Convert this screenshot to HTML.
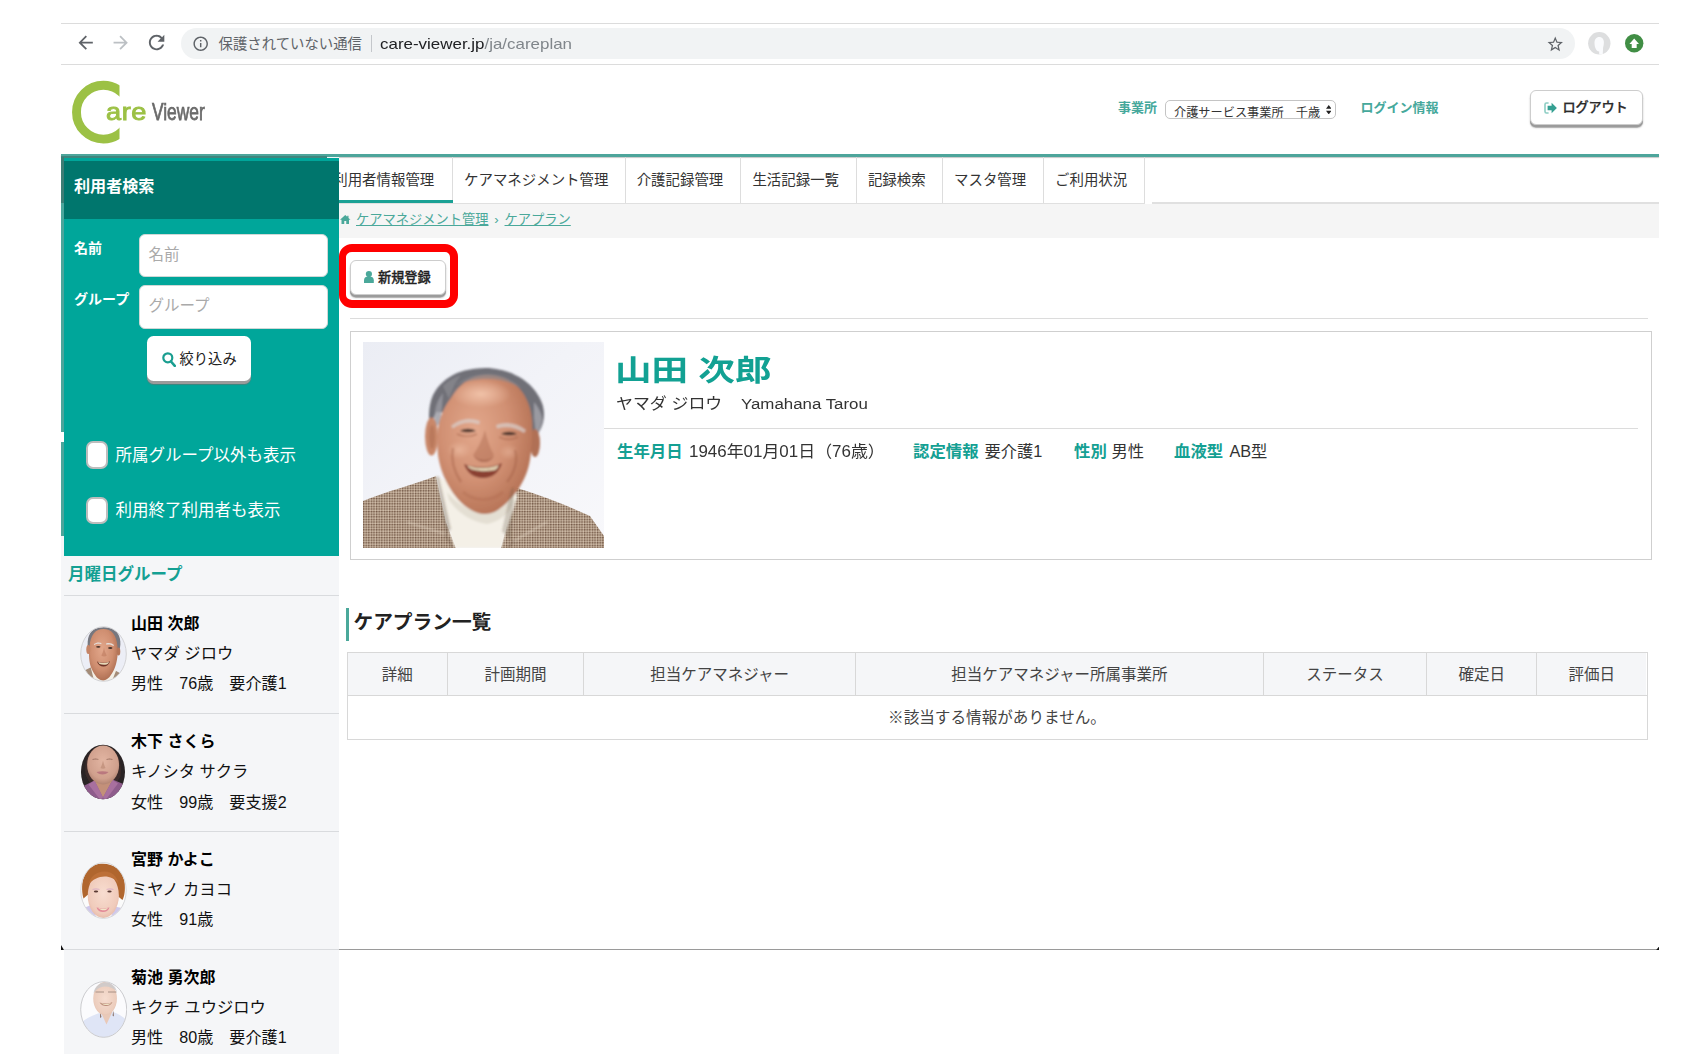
<!DOCTYPE html>
<html lang="ja">
<head>
<meta charset="utf-8">
<title>Care Viewer</title>
<style>
*{box-sizing:border-box;margin:0;padding:0}
html,body{width:1700px;height:1054px;overflow:hidden;background:#fff}
body{position:relative;font-family:"Liberation Sans","Noto Sans CJK JP",sans-serif;color:#333;font-size:14px}
.a{position:absolute;white-space:nowrap}
.t{position:absolute;white-space:nowrap;line-height:20px;height:20px}
.b{font-weight:bold}
.teal{color:#14a093}
/* browser chrome */
#ctop{left:61px;top:23px;width:1598px;height:1px;background:#dcdcdc}
#cbot{left:61px;top:64px;width:1598px;height:1px;background:#dcdcdc}
#pill{left:180.5px;top:28px;width:1394px;height:31px;border-radius:15.5px;background:#f1f3f4}
/* header */
#tline{left:61px;top:154px;width:1598px;height:2.600px;background:#4da59b;box-shadow:0 1px 1px rgba(0,0,0,.22)}
/* sidebar */
#sb{left:61px;top:157px;width:278px;height:897px;background:#f5f6f8}
#sbhead,#sbtop,#sbbody{left:3px !important;width:275px !important}
#sbtop{left:0;top:.5px;width:278px;height:3px;background:#00a69a}
#sbhead{left:0;top:3.100px;width:278px;height:58.600px;background:#00766d}
#sbbody{left:0;top:61.700px;width:278px;height:336.900px;background:#00a69a}
.inp{background:#fff;border-radius:6px;border:1px solid #cfd8d6}
.sbl{left:0;width:278px;height:1px;background:#d9dbde}
.li{left:70px;font-size:16.3px;line-height:22px;height:22px;color:#111}
.li.n{font-weight:bold;color:#000;font-size:16px}
.cond{display:inline-block;transform-origin:0 50%}
/* tabs */
.tab{top:157px;height:46px;line-height:46px;font-size:14.45px;color:#333;border-right:1px solid #ddd;text-align:center;padding-right:5px}
/* table */
.th{top:653px;height:42px;line-height:44px;font-size:15.5px;color:#444;text-align:center;background:#f5f6f8;border-right:1px solid #d8d8d8}
</style>
</head>
<body>
<!-- CHROME -->
<div class="a" id="ctop"></div>
<div class="a" id="cbot"></div>
<div class="a" id="pill"></div>
<svg class="a" style="left:74.6px;top:32.3px" width="21.4" height="21.4" viewBox="0 0 24 24"><path fill="#5f6368" d="M20 11H7.83l5.59-5.59L12 4l-8 8 8 8 1.41-1.41L7.83 13H20v-2z"/></svg>
<svg class="a" style="left:110.3px;top:32.3px" width="21.4" height="21.4" viewBox="0 0 24 24"><path fill="#bcc0c4" d="M12 4l-1.41 1.41L16.17 11H4v2h12.17l-5.58 5.59L12 20l8-8z"/></svg>
<svg class="a" style="left:144.9px;top:31.4px" width="23.2" height="23.2" viewBox="0 0 24 24"><path fill="#5f6368" d="M17.65 6.35C16.2 4.9 14.21 4 12 4c-4.42 0-7.99 3.58-7.99 8s3.57 8 7.99 8c3.73 0 6.84-2.55 7.73-6h-2.08c-.82 2.33-3.04 4-5.65 4-3.31 0-6-2.69-6-6s2.69-6 6-6c1.66 0 3.14.69 4.22 1.78L13 11h7V4l-2.35 2.35z"/></svg>
<svg class="a" style="left:192.3px;top:34.8px" width="17.4" height="17.4" viewBox="0 0 24 24"><path fill="#5f6368" d="M11 17h2v-6h-2v6zm1-15C6.48 2 2 6.48 2 12s4.48 10 10 10 10-4.48 10-10S17.52 2 12 2zm0 18c-4.41 0-8-3.59-8-8s3.59-8 8-8 8 3.59 8 8-3.59 8-8 8zM11 9h2V7h-2v2z"/></svg>
<div class="t" style="left:218.5px;top:33.5px;font-size:14.4px;color:#5f6368">保護されていない通信</div>
<div class="a" style="left:371px;top:35px;width:1px;height:17px;background:#c4c7cb"></div>
<div class="t" style="left:380.3px;top:33.5px;font-size:15px;color:#202124;transform:scaleX(1.129);transform-origin:0 50%">care-viewer.jp<span style="color:#80868b">/ja/careplan</span></div>
<svg class="a" style="left:1545.5px;top:34.6px" width="18.5" height="18.5" viewBox="0 0 24 24"><path fill="#5f6368" d="M22 9.24l-7.19-.62L12 2 9.19 8.63 2 9.24l5.46 4.73L5.82 21 12 17.27 18.18 21l-1.63-7.03L22 9.24zM12 15.4l-3.76 2.27 1-4.28-3.32-2.88 4.38-.38L12 6.1l1.71 4.04 4.38.38-3.32 2.88 1 4.28L12 15.4z"/></svg>
<svg class="a" style="left:1588px;top:32px" width="23" height="23" viewBox="0 0 23 23"><defs><clipPath id="gc"><circle cx="11.300" cy="11.300" r="11.200"/></clipPath></defs><circle cx="11.300" cy="11.300" r="11.200" fill="#dddedf"/><path clip-path="url(#gc)" fill="#fafbfd" d="M11.200 5c-2.900 0-4.700 2.500-4.700 6 0 2.800.7 5.400 1.900 7 .8 1.100 1.900 1.600 2.700 1.300l.2 4h3.400l.4-7.500c.5-2 .8-3.700.8-5.300 0-3.300-1.800-5.500-4.700-5.500z"/></svg>
<svg class="a" style="left:1625.200px;top:34.2px" width="18.4" height="18.4" viewBox="0 0 20 20"><circle cx="10" cy="10" r="10" fill="#418e45"/><path fill="#fff" d="M10 4.900L4.800 11h2.500v4.300h5.400V11h2.500z"/></svg>
<!-- HEADER -->
<div class="a" id="tline"></div>
<svg class="a" style="left:70px;top:78px" width="52" height="68" viewBox="70 78 52 68"><defs><clipPath id="cc"><rect x="70" y="78" width="49.5" height="68"/></clipPath></defs><circle cx="103.4" cy="112.2" r="26.9" fill="none" stroke="#9cc145" stroke-width="8.9" clip-path="url(#cc)"/></svg>
<div class="a" style="left:105.800px;top:94.300px;height:36px;line-height:36px;font-size:24px;color:#9cc145;letter-spacing:.5px;-webkit-text-stroke:.9px #9cc145;transform:scaleX(1.13);transform-origin:0 50%">are</div>
<div class="a" style="left:151.5px;top:94px;height:36px;line-height:36px;font-size:23.600px;color:#6a6a6a;-webkit-text-stroke:.75px #6a6a6a;transform:scaleX(.735);transform-origin:0 50%">Viewer</div>
<div class="t b" style="left:1118px;top:97.5px;font-size:13px;color:#45a89b">事業所</div>
<div class="a" style="left:1164.5px;top:100px;width:171.5px;height:18.5px;border:1px solid #c4c4c4;border-radius:5px;background:#fff"></div>
<div class="t" style="left:1174px;top:102.8px;font-size:12.2px;color:#333">介護サービス事業所　千歳</div>
<svg class="a" style="left:1325.5px;top:104.5px" width="5.500" height="9.500" viewBox="0 0 6.500 11"><path fill="#222" d="M3.250 0L6.500 4.300H0zM3.250 11L0 6.700h6.500z"/></svg>
<div class="t b" style="left:1360.5px;top:97.5px;font-size:13px;color:#45a89b">ログイン情報</div>
<div class="a" style="left:1530.3px;top:89.7px;width:112.4px;height:35.8px;border:1px solid #cdcdcd;border-radius:6px;background:#fff;box-shadow:0 2.200px 0 0 #9b9b9b,0 2.800px 1.500px 0 rgba(120,120,120,.6)"></div>
<svg class="a" style="left:1544px;top:101.500px" width="13" height="12" viewBox="0 0 13 12"><path fill="none" stroke="#8ccdc3" stroke-width="1.600" d="M4.600 1H2.400C1.500 1 1 1.500 1 2.400v7.200C1 10.500 1.500 11 2.400 11h2.200"/><path fill="#35a092" d="M7.600 .8L12.900 6 7.600 11.200V8.200H3.600V3.800h4z"/></svg>
<div class="t" style="left:1562.5px;top:98.300px;font-size:13.2px;color:#2b2b2b;letter-spacing:-.2px;font-weight:500;-webkit-text-stroke:.25px #2b2b2b">ログアウト</div>
<!-- TABS -->
<div class="a" style="left:339px;top:203px;width:806px;height:1px;background:#e0e0e0"></div>
<div class="a" style="left:1152px;top:202.200px;width:507px;height:1.600px;background:#e0e0e0"></div>
<div class="a tab" style="left:320.50px;width:132.50px">利用者情報管理</div>
<div class="a tab" style="left:453.00px;width:172.50px">ケアマネジメント管理</div>
<div class="a tab" style="left:625.50px;width:115.00px">介護記録管理</div>
<div class="a tab" style="left:740.50px;width:116.50px">生活記録一覧</div>
<div class="a tab" style="left:857.00px;width:85.50px">記録検索</div>
<div class="a tab" style="left:942.50px;width:101.25px">マスタ管理</div>
<div class="a tab" style="left:1043.75px;width:100.75px">ご利用状況</div>
<div class="a" style="left:339px;top:200px;width:113.5px;height:3px;background:#1aa195"></div>
<div class="a" style="left:339px;top:204px;width:1320px;height:34.4px;background:#f5f5f5"></div>
<svg class="a" style="left:340px;top:214.500px" width="10.500" height="9" viewBox="0 0 21 18"><path fill="#4aa89a" d="M10.500 0L0 9.500h3V18h5.500v-6h4v6H18V9.500h3L17 5.900V1.500h-2.500v2.100z"/></svg>
<div class="t" style="left:356px;top:209.500px;font-size:13.25px;color:#4aa89a"><span style="text-decoration:underline">ケアマネジメント管理</span><span style="display:inline-block;width:16px;text-align:center">›</span><span style="text-decoration:underline">ケアプラン</span></div>
<!-- MAIN -->
<div class="a" style="left:338.8px;top:244.4px;width:119.2px;height:63.8px;border:8px solid #ff0000;border-left-width:7px;border-radius:13px"></div>
<div class="a" style="left:349.5px;top:259.800px;width:96.5px;height:35.600px;border:1px solid #cdcdcd;border-radius:6px;background:#fff;box-shadow:0 2.200px 0 0 #9b9b9b,0 2.800px 1.500px 0 rgba(120,120,120,.6)"></div>
<svg class="a" style="left:363.8px;top:271.2px" width="9.800" height="12" viewBox="0 0 9.800 12"><circle cx="4.900" cy="3.100" r="3.100" fill="#4aa89a"/><path fill="#4aa89a" d="M0 12V9.200C0 7 1.600 5.800 3 5.800h3.800c1.400 0 3 1.200 3 3.400V12z"/></svg>
<div class="t" style="left:378px;top:267.6px;font-size:13.2px;color:#222;font-weight:500;-webkit-text-stroke:.3px #222">新規登録</div>
<div class="a" style="left:349.5px;top:317.5px;width:1298.500px;height:1px;background:#dcdcdc"></div>
<div class="a" style="left:350px;top:331px;width:1301.500px;height:228.500px;border:1px solid #cfcfcf;background:#fff"></div>
<svg class="a" style="left:363px;top:342px" width="241" height="206" viewBox="0 0 241 206">
<defs>
<linearGradient id="pbg" x1="0" y1="0" x2="1" y2="1"><stop offset="0" stop-color="#ebedf4"/><stop offset=".45" stop-color="#f2f3f8"/><stop offset="1" stop-color="#f8f8fb"/></linearGradient>
<radialGradient id="pface" cx=".4" cy=".4" r=".72"><stop offset="0" stop-color="#e3a88c"/><stop offset=".5" stop-color="#d19073"/><stop offset=".85" stop-color="#b87558"/><stop offset="1" stop-color="#9c5f46"/></radialGradient>
<radialGradient id="phl" cx=".5" cy=".5" r=".5"><stop offset="0" stop-color="#f3c6ad" stop-opacity=".9"/><stop offset="1" stop-color="#f3c6ad" stop-opacity="0"/></radialGradient>
<pattern id="chk" width="2.600" height="2.600" patternUnits="userSpaceOnUse"><rect width="2.600" height="2.600" fill="#b29a85"/><rect width="1.300" height="1.300" fill="#6f5646"/><rect x="1.300" y="1.300" width="1.300" height="1.300" fill="#d4c4b2"/></pattern>
<filter id="pbl"><feGaussianBlur stdDeviation="1.100"/></filter>
<filter id="pbl2"><feGaussianBlur stdDeviation="2.200"/></filter>
<filter id="pbl0"><feGaussianBlur stdDeviation=".45"/></filter>
</defs>
<rect width="241" height="206" fill="url(#pbg)"/>
<g filter="url(#pbl0)">
<path fill="url(#chk)" d="M0 159c24-10 50-16 73-25l10 46 10 26H0z"/>
<path fill="url(#chk)" d="M151 145c26 8 52 18 76 29l14 20v12H138l8-33z"/>
</g>
<g filter="url(#pbl)">
<path fill="#6f6f77" d="M67 86c-2-12-1-24 3-33 5-10 13-17 24-22 10-4 22-5 32-5 10 1 19 3 26 7 9 4 16 10 21 17 5 7 8 14 8 22 0 10-4 19-11 25l-3-22-94-5z"/>
<path fill="#9a9aa1" d="M72 70c1-8 4-14 8-19-1 10-1 20-3 30l-5 5c-1-6-1-11 0-16z" opacity=".8"/>
<path fill="#a5a5ab" d="M171 60c5 6 8 12 8 18-1 7-3 12-6 16l-2-18z" opacity=".8"/>
<path fill="#8b8b92" d="M80 44c6-6 12-9 18-11-5 6-9 14-12 24z" opacity=".7"/>
<ellipse cx="68.500" cy="94.500" rx="6.500" ry="19" fill="#c98769"/>
<ellipse cx="69" cy="95" rx="3" ry="12" fill="#a9684d" opacity=".45"/>
<ellipse cx="172" cy="101" rx="5" ry="14" fill="#b07055"/>
<path fill="#f4f0e7" d="M73 134l14 6 66 6 1 10-16 50H92l-9-26z"/>
<path fill="#d9d3c6" d="M84 150c10 12 24 20 40 22 10-2 20-8 26-18l2 6c-6 12-16 20-28 22-16-2-30-12-38-24z" opacity=".6"/>
<path fill="url(#pface)" d="M75 86c2-10 6-22 13-30 5-8 11-15 19-19 6-3 11-4 17-4 13 0 24 5 32 13 8 9 12 20 13 32 1 10 0 22-1 32-1 10-3 20-8 29-6 12-15 22-25 29-6 4-14 5-20 3-9-3-18-10-25-20-8-12-13-24-15-38-1-9-1-18 0-27z"/>
<ellipse cx="118" cy="52" rx="30" ry="14" fill="url(#phl)"/>
<ellipse cx="96" cy="108" rx="12" ry="9" fill="url(#phl)" opacity=".6"/>
<ellipse cx="146" cy="110" rx="10" ry="8" fill="url(#phl)" opacity=".45"/>
<path fill="#85858c" d="M92 44c8-8 20-12 32-12 13 0 26 5 36 15-12-7-23-10-36-10-12 0-22 2-32 7z" opacity=".65"/>
<path fill="#d8d0cd" opacity=".7" d="M88 84c8-7 19-9 29-5l-1 3.500c-9-3-18-2-26 4z"/>
<path fill="#d8d0cd" opacity=".7" d="M133 83c10-4 21-2 30 5l-2 3c-9-6-18-7-27-4.500z"/>
<path fill="#46302a" d="M97 89c5-3 11-3 16 0-5 1.800-11 1.800-16 0z"/>
<path fill="#46302a" d="M138 92c5-3 11-3 16 0-5 1.800-11 1.800-16 0z"/>
<path d="M94 92c6 3 14 3 20 0M136 95c6 3 13 3 19 0" stroke="#a5634a" stroke-width="1.500" fill="none" opacity=".6"/>
<path fill="#a8644a" d="M122 88c2 9 5 18 9 25-3 5-9 6-14 5-4-1-6-3-7-5 5-7 9-15 12-25z" opacity=".4"/>
<path fill="#8f4e3a" d="M111 114c3 3 7 4 10 4s7-1 10-4c-2 4-6 6-10 6s-8-2-10-6z" opacity=".55"/>
<path fill="#8a3f33" d="M101 122c12 4.500 26 4.500 38-1-3 10-10 15-19 15s-16-5-19-14z"/>
<path fill="#e3d4b4" d="M104 123.500c10 3.500 22 3.500 32-.500-1 2.500-2.500 4.500-4.500 5.200-8 1.300-16 1-23-1-2-.7-3.500-2-4.500-3.700z"/>
<path d="M109 124v5M114.500 125v5M120 125.300v5M125.500 125v5M131 124v5" stroke="#bfae90" stroke-width=".6" opacity=".7"/>
<path d="M90 106c-2 10 0 22 8 34" stroke="#9d5b42" stroke-width="2.500" fill="none" opacity=".4"/>
<path d="M152 108c3 10 0 22-8 32" stroke="#9d5b42" stroke-width="2.500" fill="none" opacity=".4"/>
<path d="M100 150c12 10 28 10 40 0" stroke="#a9654a" stroke-width="3" fill="none" opacity=".3"/>
</g>
<g filter="url(#pbl)">
<path fill="#5e4a3c" d="M73 134l3 1 12 52-5 5z" opacity=".3"/>
<path fill="#5e4a3c" d="M151 145l-3 2-9 42 9 10z" opacity=".25"/>
<path d="M44 180l38 12M184 180l-33 19" stroke="#e6dac9" stroke-width="1.200" opacity=".7"/>
<path d="M82 192l8 14M151 199l-6 7" stroke="#6a5445" stroke-width="1.500" opacity=".5"/>
</g>
</svg>

<div class="a b" style="left:615px;top:349px;height:44px;line-height:44px;font-size:32px;color:#12a193;transform:scale(1.143,.91);transform-origin:0 50%">山田 次郎</div>
<div class="t" style="left:616px;top:394px;font-size:15.6px;color:#333;transform:scaleX(1.085);transform-origin:0 50%">ヤマダ ジロウ</div>
<div class="t" style="left:741px;top:393.800px;font-size:15.2px;color:#333;transform:scaleX(1.11);transform-origin:0 50%">Yamahana Tarou</div>
<div class="a" style="left:604px;top:427.5px;width:1034px;height:1px;background:#dcdcdc"></div>
<div class="t b teal" style="left:617px;top:441px;font-size:16.4px">生年月日</div>
<div class="t" style="left:688.8px;top:441px;font-size:16.3px;color:#333;transform:scaleX(1.04);transform-origin:0 50%">1946年01月01日（76歳）</div>
<div class="t b teal" style="left:913px;top:441px;font-size:16.4px">認定情報</div>
<div class="t" style="left:984.5px;top:441px;font-size:16.3px;color:#333">要介護1</div>
<div class="t b teal" style="left:1074px;top:441px;font-size:16.4px">性別</div>
<div class="t" style="left:1111.5px;top:441px;font-size:16.3px;color:#333">男性</div>
<div class="t b teal" style="left:1174px;top:441px;font-size:16.4px">血液型</div>
<div class="t" style="left:1229.4px;top:441px;font-size:16.3px;color:#333">AB型</div>
<div class="a" style="left:346.2px;top:607.5px;width:3.300px;height:33px;background:#4aa89a"></div>
<div class="a b" style="left:353.5px;top:608px;height:28px;line-height:28px;font-size:19.700px;color:#222">ケアプラン一覧</div>
<div class="a" style="left:346.500px;top:652px;width:1301px;height:87.500px;border:1px solid #d8d8d8;background:#fff"></div>
<div class="a" style="left:347.500px;top:695px;width:1299px;height:1px;background:#d8d8d8"></div>
<div class="a th" style="left:347.50px;width:100.50px">詳細</div>
<div class="a th" style="left:448.00px;width:136.25px">計画期間</div>
<div class="a th" style="left:584.25px;width:271.95px">担当ケアマネジャー</div>
<div class="a th" style="left:856.20px;width:407.50px">担当ケアマネジャー所属事業所</div>
<div class="a th" style="left:1263.70px;width:163.50px">ステータス</div>
<div class="a th" style="left:1427.20px;width:109.90px">確定日</div>
<div class="a th" style="left:1537.10px;width:109.40px;border-right:0">評価日</div>
<div class="t" style="left:347.5px;width:1299px;top:707.700px;font-size:15.6px;color:#444;text-align:center">※該当する情報がありません。</div>
<div class="a" style="left:339px;top:948.5px;width:1320px;height:1px;background:#9a9a9a"></div>
<!-- SIDEBAR -->
<div class="a" id="sb">
<div class="a" id="sbhead"></div>
<div class="a" id="sbtop"></div>
<div class="a" style="left:0;top:-1.300px;width:266px;height:2.300px;background:#3f857d"></div>
<div class="a" id="sbbody"></div>
<div class="a" style="left:0;top:0;width:3px;height:46px;background:#3d7d75"></div>
<div class="a" style="left:0;top:46px;width:3px;height:332.700px;background:#4ba59b"></div>
<div class="a" style="left:0;top:274.800px;width:3px;height:10.400px;background:#fff"></div>
<div class="a" style="left:0;top:792px;width:3px;height:105px;background:#fff"></div>
</div>
<div class="t b" style="left:74px;top:176px;font-size:16.1px;color:#fff">利用者検索</div>
<div class="t b" style="left:74px;top:237.7px;font-size:14px;color:#fff">名前</div>
<div class="a inp" style="left:139px;top:233.5px;width:189px;height:43.5px"></div>
<div class="t" style="left:148.4px;top:244.5px;font-size:15.5px;color:#aaa">名前</div>
<div class="t b" style="left:74px;top:289px;font-size:14px;color:#fff">グループ</div>
<div class="a inp" style="left:139px;top:285px;width:189px;height:43.5px"></div>
<div class="t" style="left:148.4px;top:295.800px;font-size:15.5px;color:#aaa">グループ</div>
<div class="a" style="left:147.2px;top:336.100px;width:103.4px;height:44.600px;border-radius:6.500px;background:#fff;box-shadow:0 3px 0 0 #9b9b9b,0 3.600px 1px 0 rgba(110,110,110,.6)"></div>
<svg class="a" style="left:161.5px;top:351.5px" width="14" height="15" viewBox="0 0 14 15"><circle cx="5.800" cy="5.800" r="4.500" fill="none" stroke="#1a9e90" stroke-width="2.200"/><path d="M9 9.500l3.800 4.300" stroke="#1a9e90" stroke-width="2.600" stroke-linecap="round"/></svg>
<div class="t" style="left:179.5px;top:348.700px;font-size:14.3px;color:#222">絞り込み</div>
<div class="a" style="left:85.700px;top:441.200px;width:22.600px;height:27.600px;border:2px solid #bdbdbd;border-radius:7px;background:#fff"></div>
<div class="t" style="left:115.5px;top:444.500px;font-size:16.5px;color:#fff">所属グループ以外も表示</div>
<div class="a" style="left:85.700px;top:496.700px;width:22.600px;height:27.600px;border:2px solid #bdbdbd;border-radius:7px;background:#fff"></div>
<div class="t" style="left:115.5px;top:500.300px;font-size:16.5px;color:#fff">利用終了利用者も表示</div>
<div class="t b teal" style="left:68px;top:563.700px;font-size:16.5px">月曜日グループ</div>
<div class="a sbl" style="left:64px;top:594.50px;width:275px"></div>
<div class="a li n" style="left:131px;top:612.75px">山田 次郎</div>
<div class="a li" style="left:131px;top:642.00px">ヤマダ ジロウ</div>
<div class="a li" style="left:131px;top:672.25px"><span class="cond" style="font-size:16.1px">男性　76歳　要介護1</span></div>
<svg class="a" style="left:79.5px;top:626px" width="47" height="56" viewBox="-0.5 -0.5 47 56"><defs><clipPath id="c0"><ellipse cx="23" cy="27.5" rx="22.6" ry="27.1"/></clipPath><filter id="ab"><feGaussianBlur stdDeviation=".5"/></filter><radialGradient id="f0" cx=".45" cy=".4" r=".65"><stop offset="0" stop-color="#e2a78b"/><stop offset=".6" stop-color="#cf8e70"/><stop offset="1" stop-color="#a8694e"/></radialGradient></defs>
<g clip-path="url(#c0)"><rect x="-1" y="-1" width="48" height="57" fill="#eceef6"/><g filter="url(#ab)">
<path fill="#77777e" d="M7.500 22C6 12 9 4 16 1.800c5-1.500 11-1.500 16 .5 6 3 9 10 7.500 19l-2 5-28 .5z"/>
<path fill="#a48c78" d="M4 44l8-4 3 16H4zM33 43l9 5v8H29z"/>
<path fill="#f3efe6" d="M10 40l26 3-5 13H14z"/>
<path fill="url(#f0)" d="M9 20C10 8 15 2.500 23 2.500S36 8 37 20c.8 8-.5 16-3 22-3 7-7 12-11.500 12S14 49 11 42C8.500 36 8 28 9 20z"/>
<ellipse cx="7.800" cy="23" rx="2" ry="4.500" fill="#c58466"/><ellipse cx="38" cy="25" rx="1.800" ry="4" fill="#b57558"/>
<path fill="#e4dedb" d="M13.500 17.500c2-1.500 5-2 7.500-1l-.3 1.200c-2.500-.8-5-.4-7 1zM25.500 17c3-1 6-.4 8 1.500l-.6 1c-2-1.500-4.500-2-7-1.200z"/>
<ellipse cx="17.800" cy="20.300" rx="2.200" ry=".9" fill="#4a342c"/><ellipse cx="29.800" cy="21.500" rx="2.200" ry=".9" fill="#4a342c"/>
<path fill="#b87458" d="M23.500 21c.5 3 1.500 6 2.800 8-1.500 1.200-4 1.200-5.500 0 1.200-2 2.200-5 2.700-8z" opacity=".5"/>
<path fill="#6e3327" d="M16.500 35c4 1.800 9 1.800 13-.3-1 3.500-3.500 5.300-6.500 5.300s-5.500-1.800-6.500-5z"/>
<path fill="#e6d8b8" d="M17.500 35.600c3.500 1.200 7.500 1.200 11-.2-.5 1.500-1.500 2.300-2.500 2.600-2.500.4-5 .2-7-.6z"/>
</g></g><ellipse cx="23" cy="27.500" rx="22.800" ry="27.300" fill="none" stroke="#c9c9cc" stroke-width=".8"/></svg>
<div class="a sbl" style="left:64px;top:712.75px;width:275px"></div>
<div class="a li n" style="left:131px;top:731.00px">木下 さくら</div>
<div class="a li" style="left:131px;top:760.25px">キノシタ サクラ</div>
<div class="a li" style="left:131px;top:790.50px"><span class="cond" style="font-size:16.1px">女性　99歳　要支援2</span></div>
<svg class="a" style="left:80px;top:744px" width="46" height="56" viewBox="-0.5 -0.5 46 56"><defs><clipPath id="c1"><ellipse cx="22.500" cy="27.500" rx="22" ry="27.200"/></clipPath><radialGradient id="f1" cx=".5" cy=".4" r=".65"><stop offset="0" stop-color="#e2b5a2"/><stop offset=".7" stop-color="#d0a08d"/><stop offset="1" stop-color="#a87a68"/></radialGradient></defs>
<g clip-path="url(#c1)"><rect x="-1" y="-1" width="48" height="57" fill="#2a2425"/><g filter="url(#ab)">
<path fill="#3b2b29" d="M5 30C3 14 10 2 22.500 1.500 35 2 42 14 40 32l-4 6H9z"/>
<path fill="#8e5c8c" d="M2 42l12-6 9 6 9-7 12 5v16H2z"/>
<path fill="#c39079" d="M14 36l8.500 17L32 35.500z"/>
<path fill="#a8709f" d="M14 36l8.500 17-3 2L8 40zM32 35.500L22.500 53l3 2 12-16z"/>
<ellipse cx="22.600" cy="20.500" rx="16" ry="19.500" fill="url(#f1)"/>
<path fill="#7d5648" d="M12 14.500c2-.8 4-.8 6 0l-.2.800c-2-.5-4-.5-5.600.1zM26 14.500c2-.8 4-.8 6 0l-.2.900c-2-.6-3.800-.6-5.600 0z" opacity=".7"/>
<path fill="#b5707a" d="M16 27.500c4-1 8-1 12 0-2 1.800-4 2.500-6 2.500s-4-.7-6-2.500z" opacity=".85"/>
<path fill="#b07d68" d="M22.500 16c.8 3 1.500 5.500 2.500 7.500-1.500 1-3.500 1-5 0 1-2 1.800-4.500 2.500-7.500z" opacity=".5"/>
</g></g></svg>
<div class="a sbl" style="left:64px;top:830.50px;width:275px"></div>
<div class="a li n" style="left:131px;top:848.75px">宮野 かよこ</div>
<div class="a li" style="left:131px;top:878.00px">ミヤノ カヨコ</div>
<div class="a li" style="left:131px;top:908.25px"><span class="cond" style="font-size:16.1px">女性　91歳</span></div>
<svg class="a" style="left:80px;top:862px" width="47" height="57" viewBox="-0.5 -0.5 47 57"><defs><clipPath id="c2"><ellipse cx="23" cy="28" rx="22.500" ry="27.700"/></clipPath><radialGradient id="f2" cx=".5" cy=".45" r=".65"><stop offset="0" stop-color="#f8ddd0"/><stop offset=".7" stop-color="#f0cbbb"/><stop offset="1" stop-color="#dfae9b"/></radialGradient></defs>
<g clip-path="url(#c2)"><rect x="-1" y="-1" width="48" height="58" fill="#fbfbfb"/><g filter="url(#ab)">
<path fill="#b0662f" d="M3 36C-1 20 4 4 18 1.500c12-2 24 4 26 18 1 8 0 14-2 18l-5-4-30-1z"/>
<path fill="#cfc8ea" d="M2 46l10-4 4 14H2zM34 44l10 2v10H30z"/>
<ellipse cx="22.800" cy="33" rx="15.600" ry="22.500" fill="url(#f2)"/>
<path fill="#bd7038" d="M8 22c2-8 8-13 16-13 7 0 12 4 14 12-4-5-8-7-14-7s-12 3-16 8z"/>
<ellipse cx="15.500" cy="29" rx="2.200" ry="1" fill="#5a3a34"/><ellipse cx="29" cy="29" rx="2.200" ry="1" fill="#5a3a34"/>
<path fill="#d6a8c4" d="M12 26.500c2-1 5-1 7 0v1c-2-.7-5-.7-7 0zM26 26.500c2-1 5-1 7 0v1c-2-.7-5-.7-7 0z" opacity=".7"/>
<path fill="#e28a98" d="M16 45c4 1 9 1 13 0-1 3-3.500 4.500-6.500 4.500S17 48 16 45z"/>
<path fill="#f3e6c8" d="M17.500 45.500c3.500.8 6.500.8 10 0-.8 1.300-2 2-3 2.200-2 .2-5 0-7-2.200z"/>
</g></g><ellipse cx="23" cy="28" rx="22.700" ry="27.900" fill="none" stroke="#cfcfd2" stroke-width=".8"/></svg>
<div class="a sbl" style="left:64px;top:948.50px;width:275px"></div>
<div class="a li n" style="left:131px;top:966.75px">菊池 勇次郎</div>
<div class="a li" style="left:131px;top:996.00px">キクチ ユウジロウ</div>
<div class="a li" style="left:131px;top:1026.25px"><span class="cond" style="font-size:16.1px">男性　80歳　要介護1</span></div>
<svg class="a" style="left:79.500px;top:980.500px" width="47" height="57" viewBox="-0.5 -0.5 47 57"><defs><clipPath id="c3"><ellipse cx="23.200" cy="28" rx="22.800" ry="27.600"/></clipPath><radialGradient id="f3" cx=".5" cy=".5" r=".65"><stop offset="0" stop-color="#f6ddd0"/><stop offset=".7" stop-color="#eccdbd"/><stop offset="1" stop-color="#d9b09c"/></radialGradient></defs>
<g clip-path="url(#c3)"><rect x="-1" y="-1" width="48" height="58" fill="#fbfbfd"/><g filter="url(#ab)">
<path fill="#dfe5f6" d="M0 42c6-6 14-9 21-11l5 8 5-9c7 2 12 5 16 10v16H0z"/>
<path fill="#e9c9b8" d="M20 30l6 13 6-13z"/>
<path fill="#7a5a4c" d="M19.500 29.500l1.500 6-1.500 1zM33 29l-1 5 1.500 1z" opacity=".8"/>
<ellipse cx="24.600" cy="17" rx="11.800" ry="16.500" fill="url(#f3)"/>
<path fill="#c9c9cc" d="M13 12c1-7 6-11 12-11 5 0 10 3 11.500 9-3-3-7-5-12-5-5 0-9 3-11.500 7z" opacity=".8"/>
<path d="M15 10.500h8.500M27.500 10.500H36" stroke="#a08a80" stroke-width=".9" fill="none"/>
<path fill="#b98a78" d="M19 21c4 1.500 9 1.500 13-.5-1.500 3-4 4-6.500 4S20.500 23.500 19 21z"/>
<path fill="#efe2c4" d="M20.500 21.800c3.500 1 6.500.8 10-.4-1 1.500-2.500 2-4 2.100-2 0-4.500-.3-6-1.700z"/>
</g></g><ellipse cx="23.200" cy="28" rx="23" ry="27.800" fill="none" stroke="#c6c6c9" stroke-width=".9"/></svg>
<svg class="a" style="left:61px;top:944.500px" width="4" height="5.500" viewBox="0 0 4 5.500"><path d="M0 0L3.300 5.500H0z" fill="#111"/></svg>
<svg class="a" style="left:1655.500px;top:945.500px" width="3.500" height="4.200" viewBox="0 0 3.500 4.200"><path d="M3.500 0V4.200H0z" fill="#111"/></svg>
</body>
</html>
